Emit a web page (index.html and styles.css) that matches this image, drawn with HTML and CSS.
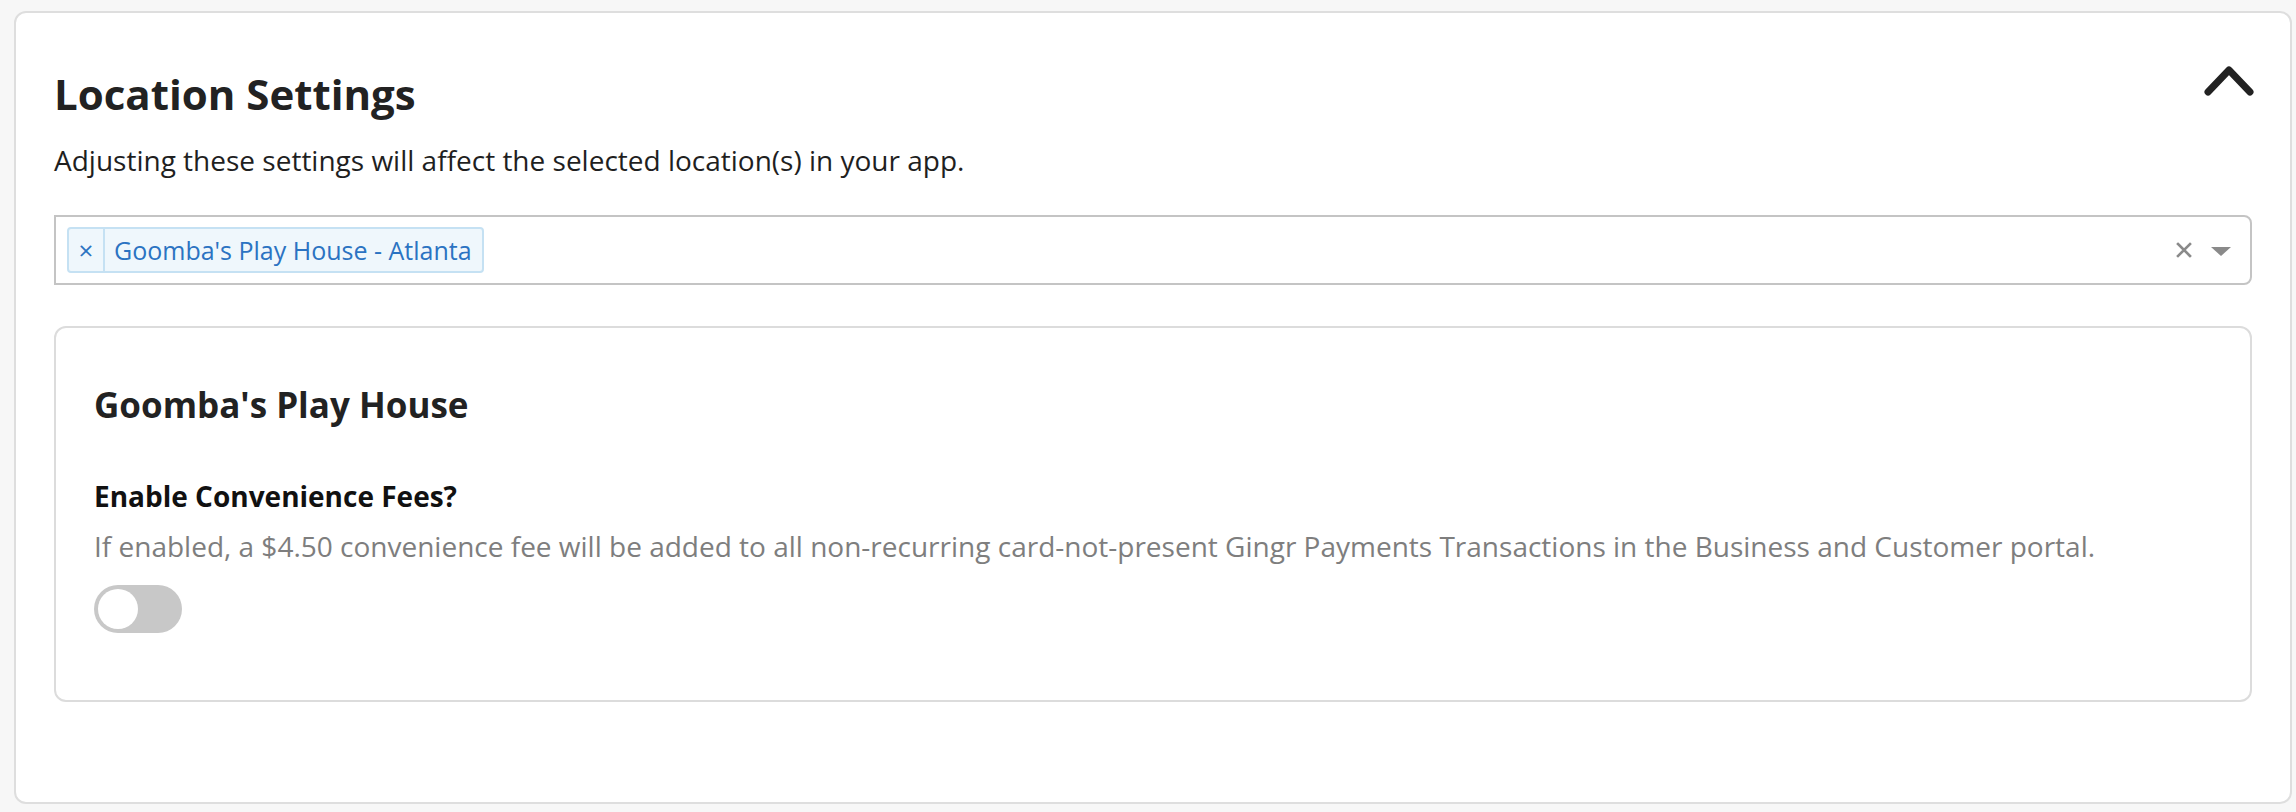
FILE: index.html
```html
<!DOCTYPE html>
<html lang="en">
<head>
<meta charset="utf-8">
<title>Location Settings</title>
<link rel="stylesheet" href="styles.css">
</head>
<body>
<section class="panel">
  <div class="panel-head">
    <h2 class="panel-title">Location Settings</h2>
    <button class="collapse-btn" aria-label="Collapse">
      <svg width="52" height="36" viewBox="0 0 52 36"><polyline points="4,30 25,8 46,30" fill="none" stroke="#222" stroke-width="7" stroke-linecap="round" stroke-linejoin="round"/></svg>
    </button>
  </div>
  <p class="panel-sub">Adjusting these settings will affect the selected location(s) in your app.</p>

  <div class="select">
    <div class="select-tags">
      <span class="chip"><span class="chip-x">×</span><span class="chip-label">Goomba's Play House - Atlanta</span></span>
    </div>
    <div class="select-tools">
      <svg class="clear" width="16" height="16" viewBox="0 0 16 16"><path d="M2 2 L14 14 M14 2 L2 14" stroke="#8a8a8a" stroke-width="2.6" stroke-linecap="square"/></svg>
      <svg class="caret" width="20" height="9" viewBox="0 0 20 9"><polygon points="0,0 20,0 10,9" fill="#8a8a8a"/></svg>
    </div>
  </div>

  <div class="loc-card">
    <h3 class="loc-title">Goomba's Play House</h3>
    <div class="setting">
      <div class="setting-label">Enable Convenience Fees?</div>
      <div class="setting-help">If enabled, a $4.50 convenience fee will be added to all non-recurring card-not-present Gingr Payments Transactions in the Business and Customer portal.</div>
      <span class="toggle"><span class="knob"></span></span>
    </div>
  </div>
</section>
</body>
</html>
```

FILE: styles.css
```css
* { box-sizing: border-box; }
html, body { margin: 0; padding: 0; }
body {
  background: #f7f7f7;
  font-family: "Open Sans", "Noto Sans", sans-serif;
  color: #1f1f1f;
  width: 2296px;
  height: 812px;
  overflow: hidden;
}
.panel {
  margin: 11px 0 0 14px;
  width: 2278px;
  height: 793px;
  background: #fff;
  border: 2px solid #dedede;
  border-radius: 12px;
  padding: 53px 38px 0 38px;
}
.panel-head {
  display: flex;
  justify-content: space-between;
  align-items: flex-start;
}
.panel-title {
  margin: 0;
  font-size: 42px;
  line-height: 56px;
  font-weight: 700;
  color: #222;
}
.collapse-btn {
  border: 0;
  background: none;
  padding: 0;
  margin: -4px -4px 0 0;
  width: 52px;
  height: 36px;
}
.collapse-btn svg { display: block; }
.panel-sub {
  margin: 18px 0 0 0;
  font-size: 28px;
  line-height: 40px;
  color: #1f1f1f;
}
.select {
  margin-top: 35px;
  height: 70px;
  border: 2px solid #c4c4c4;
  border-radius: 0 8px 8px 0;
  display: flex;
  align-items: center;
  justify-content: space-between;
  padding: 0 19px 0 11px;
}
.chip {
  display: inline-flex;
  align-items: stretch;
  height: 46px;
  border: 2px solid #c5e1f3;
  border-radius: 4px;
  background: #eff7fc;
  color: #2b73c2;
  font-size: 25px;
}
.chip-x {
  width: 36px;
  border-right: 2px solid #c5e1f3;
  display: flex;
  align-items: center;
  justify-content: center;
  font-size: 26px;
}
.chip-label {
  display: flex;
  align-items: center;
  padding: 0 10px 0 9px;
}
.select-tools {
  display: flex;
  align-items: center;
  gap: 19px;
}
.clear { display: block; }
.caret { display: block; margin-top: 2px; }
.loc-card {
  margin-top: 41px;
  height: 376px;
  border: 2px solid #dcdcdc;
  border-radius: 12px;
  padding: 55px 38px 0 38px;
}
.loc-title {
  margin: 0;
  font-size: 35px;
  line-height: 44px;
  font-weight: 700;
  color: #222;
}
.setting { margin-top: 49px; }
.setting-label {
  font-size: 28px;
  line-height: 40px;
  font-weight: 700;
  color: #111;
}
.setting-help {
  margin-top: 10px;
  font-size: 28px;
  line-height: 40px;
  color: #7e7e7e;
}
.toggle {
  display: block;
  margin-top: 19px;
  width: 88px;
  height: 48px;
  border-radius: 24px;
  background: #c8c8c8;
  padding: 4px;
}
.knob {
  display: block;
  width: 40px;
  height: 40px;
  border-radius: 50%;
  background: #fff;
}
```
